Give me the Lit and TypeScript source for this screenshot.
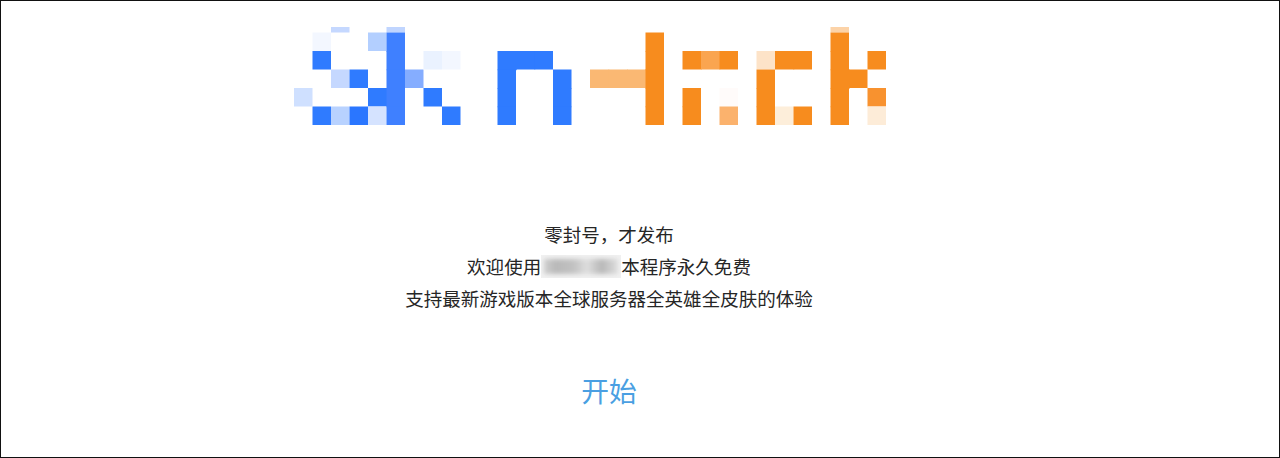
import { LitElement, html, css, svg } from "lit";
import { customElement } from "lit/decorators.js";

const CELL = 18.5;
const TOP = 5.5;
const OVERLAP = 0.7;
const B = "#2f7bff", B2 = "#3f80ff", O = "#f78c1e";
const SOLID = [B, B2, O, "#fab873", "#2a76ff", "#faa550"];
// [column, row, colour]; row -1 is the thin clipped sliver above the first row
const cells: [number, number, string][] = [
  [0, 3, "#cfe0ff"],
  [1, 0, "#f3f7ff"], [1, 1, B], [1, 4, B],
  [2, -1, "#c5d8ff"], [2, 2, "#c5d8ff"], [2, 4, "#b8d2ff"],
  [3, 2, B], [3, 4, "#2a76ff"],
  [4, 0, "#b3cfff"], [4, 3, B], [4, 4, "#d5e3ff"],
  [5, -1, "#c0d5ff"], [5, 0, B2], [5, 1, B2], [5, 2, B2], [5, 3, B2], [5, 4, B2],
  [6, 2, "#85adff"],
  [7, 1, "#eaf2ff"], [7, 3, B],
  [8, 1, "#f3f7ff"], [8, 4, B],
  [11, 1, B], [11, 2, B], [11, 3, B], [11, 4, B],
  [12, 1, B], [13, 1, B],
  [14, 2, B], [14, 3, B], [14, 4, B],
  [16, 2, "#fab873"], [17, 2, "#fab873"], [18, 2, "#fab873"],
  [19, 0, O], [19, 1, O], [19, 2, O], [19, 3, O], [19, 4, O],
  [21, 1, O], [21, 3, O], [21, 4, O],
  [22, 1, "#faa550"],
  [23, 1, O], [23, 3, "#fffbfa"], [23, 4, "#fbb26d"],
  [25, 1, "#fde3c8"], [25, 2, O], [25, 3, O], [25, 4, O],
  [26, 1, O], [26, 4, "#fdeeda"],
  [27, 1, O], [27, 4, O],
  [29, -1, "#fcd3a8"], [29, 0, O], [29, 1, O], [29, 2, O], [29, 3, O], [29, 4, O],
  [30, 2, O],
  [31, 1, O], [31, 3, "#f8922f"], [31, 4, "#fdecd8"],
];

// A cell that touches a solid neighbour reaches slightly under it, so no seam shows.
const isSolid = (f: string) => SOLID.includes(f);
const touches = (c: number, r: number) =>
  cells.some(([x, y, f]) => x === c && y === r && isSolid(f));

@customElement("app-root")
export class AppRoot extends LitElement {
  static styles = css`
    :host {
      display: block;
      width: 1280px;
      height: 458px;
      box-sizing: border-box;
      border: 1px solid #111;
      background: #fff;
      overflow: hidden;
      font-family: "Noto Sans CJK SC", "Noto Sans", sans-serif;
      color: #262626;
    }
    .logo {
      display: block;
      margin: 26px 0 0 293px;
      filter: blur(0.45px);
    }
    .content {
      width: 1216px;
      margin-top: 93px;
      display: flex;
      flex-direction: column;
      align-items: center;
    }
    .line {
      font-size: 18.55px;
      line-height: 32px;
      height: 32px;
      display: flex;
      align-items: center;
      white-space: nowrap;
    }
    .blurred {
      width: 80px;
      height: 23px;
      background: #f1f1f1;
      display: flex;
      align-items: center;
      overflow: hidden;
    }
    .smudge {
      flex: 1;
      height: 15px;
      margin: 0 3px;
      background: linear-gradient(
        90deg,
        #cfcfcf 0%,
        #b9b9b9 16%,
        #c2c2c2 40%,
        #dedede 58%,
        #b8b8b8 78%,
        #dedede 100%
      );
      filter: blur(2px);
    }
    .start {
      margin-top: 56px;
      font-size: 27.75px;
      line-height: 40px;
      color: #4a9fe2;
      cursor: pointer;
    }
  `;

  render() {
    return html`
      <svg class="logo" width="592" height="98" viewBox="0 0 592 98" aria-hidden="true">
        ${cells.map(([c, r, fill]) => {
          if (r < 0) {
            return svg`<rect x=${c * CELL} y="0" width=${CELL} height=${TOP} fill=${fill}></rect>`;
          }
          const extendX = isSolid(fill) && touches(c + 1, r) ? OVERLAP : 0;
          const extendY = isSolid(fill) && touches(c, r + 1) ? OVERLAP : 0;
          return svg`<rect x=${c * CELL} y=${TOP + r * CELL} width=${CELL + extendX} height=${CELL + extendY} fill=${fill}></rect>`;
        })}
      </svg>
      <div class="content">
        <div class="line">零封号，才发布</div>
        <div class="line">欢迎使用<span class="blurred"><span class="smudge"></span></span>本程序永久免费</div>
        <div class="line">支持最新游戏版本全球服务器全英雄全皮肤的体验</div>
        <div class="start">开始</div>
      </div>
    `;
  }
}
